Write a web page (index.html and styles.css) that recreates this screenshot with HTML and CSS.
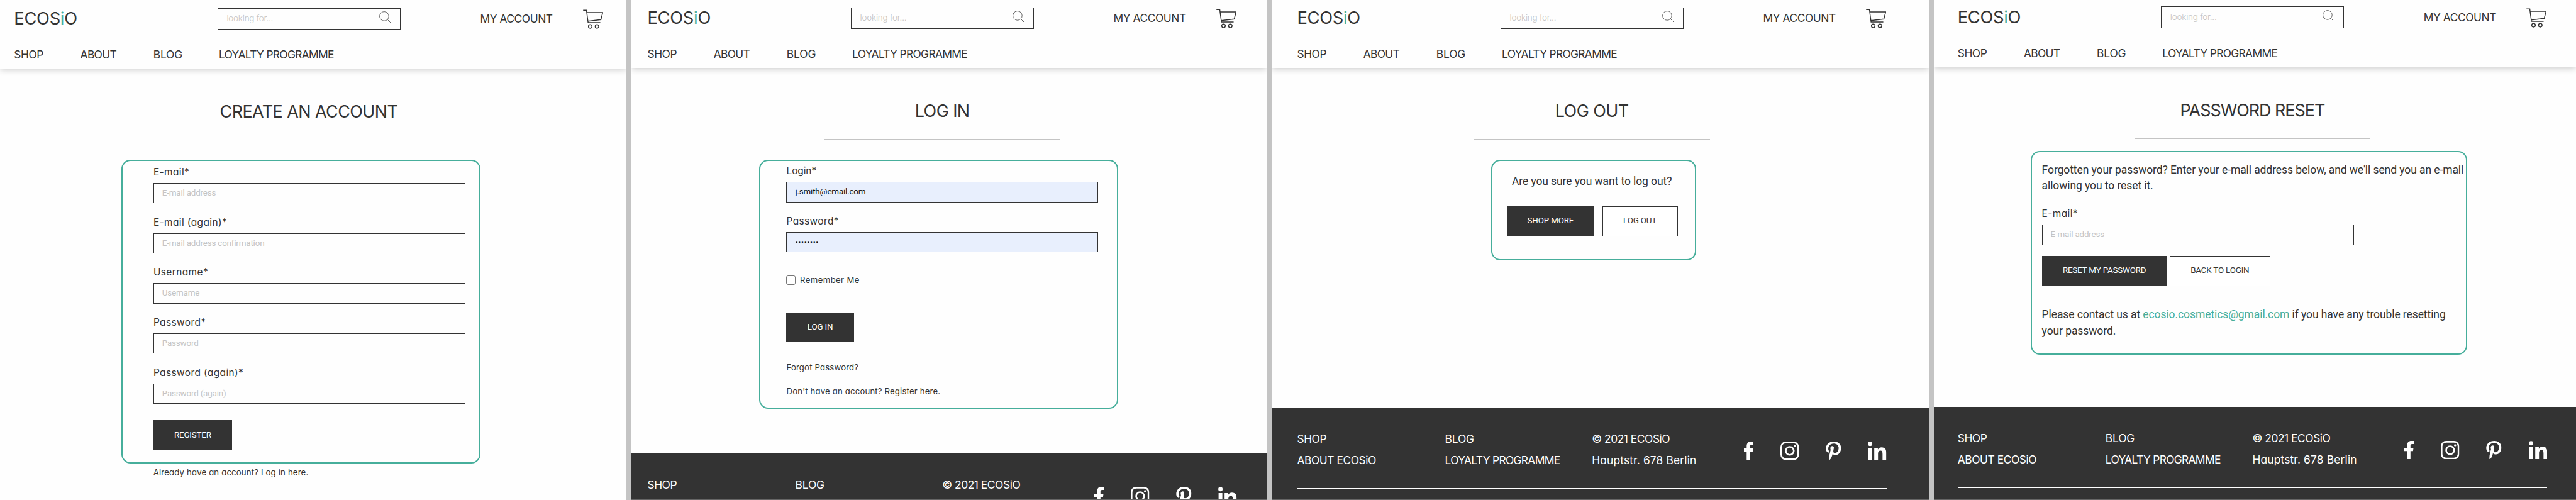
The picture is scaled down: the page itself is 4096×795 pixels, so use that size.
FILE: index.html
```html
<!DOCTYPE html>
<html lang="en">
<head>
<meta charset="utf-8">
<title>ECOSiO</title>
<link rel="stylesheet" href="styles.css">
</head>
<body>
<svg class="sprite" xmlns="http://www.w3.org/2000/svg">
  <symbol id="search" viewBox="55 40 81 81"><circle cx="88" cy="73" r="30.5"/><path d="M110 95L134 119"/></symbol>
  <symbol id="cart" viewBox="1410 26 135 129"><path d="M1411 31.500H1433L1444 114H1525M1436 47H1541L1529 94L1443 104"/><circle cx="1458" cy="139" r="12"/><circle cx="1503" cy="139" r="12"/></symbol>
  <symbol id="facebook" viewBox="57 48 64 123"><path d="M75 171V116H57V94H75V80C75 58 87 48 104 48H120V69H109C101 69 98 73 98 80V94H118L115 116H98V171Z"/></symbol>
  <symbol id="instagram" viewBox="309 48 123 123"><rect x="314.500" y="53.500" width="112" height="112" rx="30"/><circle cx="371" cy="110" r="26.500"/><circle class="dot" cx="404" cy="77" r="7.500"/></symbol>
  <symbol id="pinterest" viewBox="608 48 102 123"><path d="M631 171C628 151 635 126 641 103C636 92 640 78 652 78C662 78 664 87 661 97C658 109 655 123 668 124C685 125 694 108 694 90C693 73 680 62 660 62C638 62 625 77 625 96C625 104 627 108 630 112C632 116 629 124 624 122C613 118 609 106 609 95C610 67 631 48 663 48C691 48 710 67 710 92C710 118 694 138 673 138C664 138 658 135 654 129C649 148 645 160 633 171Z"/></symbol>
  <symbol id="linkedin" viewBox="882 48 122 123"><circle cx="896.500" cy="63.500" r="14.500"/><path d="M884 90H909V171H884ZM924 90H948V101C953 92 962 87 973 87C997 87 1004 102 1004 126V171H979V131C979 117 976 109 965 109C953 109 949 118 949 131V171H924Z"/></symbol>
</svg>
<main class="board">

  <section class="screen screen-register">
    <header class="header">
      <div class="wrap top"><a class="logo">ECOS<i>i</i>O</a><div class="search"><span>looking for...</span><svg><use href="#search"/></svg></div><a class="account">MY ACCOUNT</a><svg class="cart"><use href="#cart"/></svg></div>
      <nav class="wrap nav"><a>SHOP</a><a class="tight">ABOUT</a><a class="loose">BLOG</a><a class="tight">LOYALTY PROGRAMME</a></nav>
    </header>
    <div class="title"><h1>CREATE AN ACCOUNT</h1></div>
    <div class="card card-register">
      <label>E-mail*</label><div class="input"><span>E-mail address</span></div>
      <label>E-mail (again)*</label><div class="input"><span>E-mail address confirmation</span></div>
      <label>Username*</label><div class="input"><span>Username</span></div>
      <label>Password*</label><div class="input"><span>Password</span></div>
      <label>Password (again)*</label><div class="input"><span>Password (again)</span></div>
      <button class="btn dark register">REGISTER</button>
    </div>
    <p class="small already">Already have an account? <a>Log in here</a>.</p>
  </section>

  <section class="screen screen-login">
    <header class="header">
      <div class="wrap top"><a class="logo">ECOS<i>i</i>O</a><div class="search"><span>looking for...</span><svg><use href="#search"/></svg></div><a class="account">MY ACCOUNT</a><svg class="cart"><use href="#cart"/></svg></div>
      <nav class="wrap nav"><a>SHOP</a><a class="tight">ABOUT</a><a class="loose">BLOG</a><a class="tight">LOYALTY PROGRAMME</a></nav>
    </header>
    <div class="title"><h1>LOG IN</h1></div>
    <div class="card card-login">
      <label class="login-label">Login*</label><div class="input filled"><span>j.smith@email.com</span></div>
      <label>Password*</label><div class="input filled"><span class="dots">••••••••</span></div>
      <div class="remember small"><span class="check"></span><span>Remember Me</span></div>
      <button class="btn dark login">LOG IN</button>
      <p class="small forgot"><a>Forgot Password?</a></p>
      <p class="small join">Don't have an account? <a>Register here</a>.</p>
    </div>
    <footer class="footer">
      <div class="wrap cols"><div><a>SHOP</a></div><div><a class="loose">BLOG</a></div><div><a>© 2021 ECOSiO</a></div>
      <div class="social"><svg class="fb"><use href="#facebook"/></svg><svg class="ig"><use href="#instagram"/></svg><svg class="pt"><use href="#pinterest"/></svg><svg class="li"><use href="#linkedin"/></svg></div></div>
    </footer>
  </section>

  <section class="screen screen-logout">
    <header class="header">
      <div class="wrap top"><a class="logo">ECOS<i>i</i>O</a><div class="search"><span>looking for...</span><svg><use href="#search"/></svg></div><a class="account">MY ACCOUNT</a><svg class="cart"><use href="#cart"/></svg></div>
      <nav class="wrap nav"><a>SHOP</a><a class="tight">ABOUT</a><a class="loose">BLOG</a><a class="tight">LOYALTY PROGRAMME</a></nav>
    </header>
    <div class="title"><h1>LOG OUT</h1></div>
    <div class="card card-logout">
      <p class="text">Are you sure you want to log out?</p>
      <div class="actions"><button class="btn dark">SHOP MORE</button><button class="btn">LOG OUT</button></div>
    </div>
    <footer class="footer">
      <div class="wrap cols"><div><a>SHOP</a><a>ABOUT ECOSiO</a></div><div><a class="loose">BLOG</a><a class="tight">LOYALTY PROGRAMME</a></div><div><a>© 2021 ECOSiO</a><a class="address">Hauptstr. 678 Berlin</a></div>
      <div class="social"><svg class="fb"><use href="#facebook"/></svg><svg class="ig"><use href="#instagram"/></svg><svg class="pt"><use href="#pinterest"/></svg><svg class="li"><use href="#linkedin"/></svg></div></div>
      <hr class="wrap">
    </footer>
  </section>

  <section class="screen screen-reset">
    <header class="header">
      <div class="wrap top"><a class="logo">ECOS<i>i</i>O</a><div class="search"><span>looking for...</span><svg><use href="#search"/></svg></div><a class="account">MY ACCOUNT</a><svg class="cart"><use href="#cart"/></svg></div>
      <nav class="wrap nav"><a>SHOP</a><a class="tight">ABOUT</a><a class="loose">BLOG</a><a class="tight">LOYALTY PROGRAMME</a></nav>
    </header>
    <div class="title"><h1>PASSWORD RESET</h1></div>
    <div class="card card-reset">
      <p class="text">Forgotten your password? Enter your e-mail address below, and we'll send you an e-mail<br>allowing you to reset it.</p>
      <label>E-mail*</label><div class="input"><span>E-mail address</span></div>
      <div class="actions"><button class="btn dark">RESET MY PASSWORD</button><button class="btn">BACK TO LOGIN</button></div>
      <p class="text contact">Please contact us at <a>ecosio.cosmetics@gmail.com</a> if you have any trouble resetting<br>your password.</p>
    </div>
    <footer class="footer">
      <div class="wrap cols"><div><a>SHOP</a><a>ABOUT ECOSiO</a></div><div><a class="loose">BLOG</a><a class="tight">LOYALTY PROGRAMME</a></div><div><a>© 2021 ECOSiO</a><a class="address">Hauptstr. 678 Berlin</a></div>
      <div class="social"><svg class="fb"><use href="#facebook"/></svg><svg class="ig"><use href="#instagram"/></svg><svg class="pt"><use href="#pinterest"/></svg><svg class="li"><use href="#linkedin"/></svg></div></div>
      <hr class="wrap">
    </footer>
  </section>
</main>
</body>
</html>
```
FILE: styles.css
```css
/* 1rem = 10 design pixels */
html { font-size: 7.1885px; }
* { box-sizing: border-box; margin: 0; padding: 0; }
body { overflow: hidden; background: #fff; color: #333; font-family: Inter, "Noto Sans", sans-serif; font-feature-settings: "cv11"; }
.sprite { position: absolute; width: 0; height: 0; }
svg { display: block; flex: none; }
.board { display: flex; height: 795px; }
.screen { display: flex; flex-direction: column; height: 795px; overflow: hidden; background: #fefefe; border-left: 1.2rem solid #c4c4c4; padding-left: var(--pad); flex: none; }
.screen-register { --pad: 3.1rem; width: 138.6rem; border-left: 0; --lift: .15rem; }
.screen-login { --pad: 3.5rem; width: 141.6rem; --lift: 0rem; }
.screen-logout { --pad: 5.6rem; width: 146.5rem; --lift: 0rem; }
.screen-reset { --pad: 5.2rem; width: 143.1rem; --lift: -.15rem; }
.wrap { width: 130.4rem; }

.header { flex: none; margin-left: calc(-1 * var(--pad)); padding: 0 0 0 var(--pad); margin-top: var(--lift); height: 15rem; box-shadow: 0 .4rem 1.4rem rgba(0,0,0,.2); clip-path: inset(0 0 -3rem 0); }
.top { display: grid; grid-template-columns: 45rem 58.1rem 22.7rem 4.6rem; align-items: center; height: 8rem; }
.logo { font-size: 3.8rem; line-height: 8rem; letter-spacing: -.0106em; }
.logo i { font-style: normal; color: #46ae9b; }
.search { display: flex; align-items: center; justify-content: space-between; width: 40.5rem; height: 4.8rem; border: 1px solid #333; padding: 0 1.9rem; font: 300 1.88rem/4.6rem Inter; letter-spacing: -.018em; color: #c4c4c4; }
.search svg { width: 2.7rem; height: 2.7rem; fill: none; stroke: #333; stroke-width: 3.2; margin-top: -.5rem; }
.account, .nav a { font-size: 2.42rem; letter-spacing: -.026em; }
.cart { width: 4.5rem; height: 4.3rem; fill: none; stroke: #333; stroke-width: 6; margin-top: .3rem; }
.nav { display: grid; grid-template-columns: 14.65rem 16.15rem 14.5rem 1fr; padding-top: 2.05rem; line-height: 4rem; }
.nav .tight, .cols .tight { letter-spacing: -.039em; }
.nav .loose, .cols .loose { letter-spacing: -.009em; }

.title { flex: none; width: 52.2rem; margin: 7.13rem 0 0 39.1rem; text-align: center; border-bottom: 1px solid #c4c4c4; height: 8.7rem; }
h1 { font-weight: 400; font-size: 3.75rem; line-height: 5rem; white-space: nowrap; display: inline-block; letter-spacing: -.021em; }
.screen-reset h1 { letter-spacing: -.038em; }

.card { flex: none; border: .3rem solid #46ae9b; border-radius: 2rem; }
.card-register { width: 79.5rem; height: 67.2rem; margin: 4.37rem 0 0 23.75rem; padding: .95rem 0 0 6.8rem; }
.card-login { width: 79.5rem; height: 55.1rem; margin: 4.5rem 0 0 24.67rem; padding: .77rem 0 0 5.8rem; }
.card-logout { width: 45.4rem; height: 22.2rem; margin: 4.52rem 0 0 42.9rem; padding-top: 2.8rem; }
.card-reset { width: 96.5rem; height: 45.2rem; margin: 2.65rem 0 0 16.2rem; padding: 2.25rem 0 0 2.15rem; }
label { display: block; font-size: 2.15rem; line-height: 3rem; letter-spacing: .026em; }
.login-label { letter-spacing: -.005em; }
.input { width: 69rem; height: 4.5rem; border: 1px solid #333; margin: .88rem 0 2.72rem; padding-left: 1.8rem; font: 1.87rem/4.2rem Roboto; letter-spacing: -.015em; color: #c4c4c4; white-space: nowrap; }
.filled { background: #e8effd; color: #111; }
.dots { letter-spacing: .01em; }
.btn { display: block; height: 6.64rem; font: 1.86rem/6.2rem Roboto; letter-spacing: -.013em; border: 1px solid #333; background: #fff; color: #333; text-align: center; white-space: nowrap; }
.dark { background: #333; color: #fff; }
.register { width: 17.4rem; margin-top: 3.6rem; }
.small { font-size: 1.83rem; line-height: 3rem; letter-spacing: .0134em; white-space: nowrap; }
.small a { text-decoration: underline; text-underline-offset: .15em; }
.already { flex: none; margin: .5rem 0 0 30.8rem; }
.remember { display: flex; align-items: center; gap: 1rem; margin-top: 4.65rem; letter-spacing: .03em; }
.check { width: 2rem; height: 2rem; border: 1px solid #767676; border-radius: .4rem; background: #fff; }
.login { width: 14.9rem; margin-top: 5.6rem; }
.forgot { margin-top: 4.05rem; }
.join { margin-top: 2.4rem; }
.text { font: 2.44rem/3.58rem Roboto; letter-spacing: -.0055em; white-space: nowrap; }
.actions { display: flex; }
.card-logout .text { text-align: center; padding-right: .8rem; }
.card-logout .actions { margin: 3.6rem 0 0 3.2rem; gap: 1.75rem; }
.card-logout .btn { width: 19.35rem; }
.card-logout .btn + .btn { width: 16.7rem; }
.card-reset label { margin-top: 2.8rem; }
.card-reset .input { margin-bottom: 2.4rem; }
.card-reset .actions { gap: .6rem; }
.card-reset .btn { width: 27.7rem; }
.card-reset .btn + .btn { width: 22.2rem; }
.contact { margin-top: 4.7rem; }
.contact a { color: #46ae9b; }

.footer { flex: none; margin-top: auto; margin-left: calc(-1 * var(--pad)); padding: 4.65rem 0 0 var(--pad); background: #333; color: #fff; height: 20.6rem; overflow: hidden; border-bottom: 1px solid #666; }
.screen-login .footer { height: 10.4rem; }
.screen-logout .footer { height: 20.47rem; }
.cols { display: grid; grid-template-columns: 32.7rem 32.5rem 33.65rem 1fr; height: 13.2rem; }
.cols a { display: block; font-size: 2.42rem; line-height: 4.65rem; letter-spacing: -.026em; white-space: nowrap; }
.cols .address { letter-spacing: .009em; }
.social { display: flex; justify-content: space-between; padding-top: 2.85rem; fill: #fff; }
.social svg { height: 4.1rem; }
.fb { width: 2.13rem; }
.ig { width: 4.1rem; fill: none; stroke: #fff; stroke-width: 11; }
.dot { fill: #fff; stroke: none; }
.pt { width: 3.4rem; }
.li { width: 4.1rem; }
hr { border: 0; border-top: 1px solid #fff; }
```
